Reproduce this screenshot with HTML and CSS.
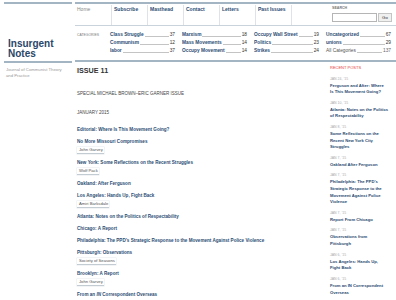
FILE: index.html
```html
<!DOCTYPE html>
<html lang="en">
<head>
    <meta charset="UTF-8">
    <meta name="viewport" content="width=device-width, initial-scale=1.0">
    <title>Insurgent Notes - Issue 11</title>
    <link rel="stylesheet" href="styles.css">
</head>
<body>
    <div class="page">
        <!-- left column: logo and tagline -->
        <div class="left-col">
            <div class="brand">
                <a class="logo" href="#">Insurgent<br>Notes</a>
            </div>
            <p class="tagline">Journal of Communist Theory and Practice</p>
        </div>

        <div class="main-col">
            <div class="masthead">
                <nav class="topnav">
                    <a class="nav-item home" href="#">Home</a>
                    <a class="nav-item" href="#">Subscribe</a>
                    <a class="nav-item" href="#">Masthead</a>
                    <a class="nav-item" href="#">Contact</a>
                    <a class="nav-item" href="#">Letters</a>
                    <a class="nav-item" href="#">Past Issues</a>
                    <div class="nav-item search-cell">
                        <form class="search">
                            <label for="s">Search</label>
                            <div class="search-row">
                                <input type="text" id="s">
                                <button type="button">Go</button>
                            </div>
                        </form>
                    </div>
                </nav>

                <div class="cats">
                    <div class="cats-label">Categories</div>
                    <ul class="cats-grid">
                        <li><a href="#">Class Struggle</a><span class="leader"></span><span class="count">37</span></li>
                        <li><a href="#">Communism</a><span class="leader"></span><span class="count">12</span></li>
                        <li><a href="#">labor</a><span class="leader"></span><span class="count">37</span></li>
                        <li><a href="#">Marxism</a><span class="leader"></span><span class="count">18</span></li>
                        <li><a href="#">Mass Movements</a><span class="leader"></span><span class="count">14</span></li>
                        <li><a href="#">Occupy Movement</a><span class="leader"></span><span class="count">14</span></li>
                        <li><a href="#">Occupy Wall Street</a><span class="leader"></span><span class="count">19</span></li>
                        <li><a href="#">Politics</a><span class="leader"></span><span class="count">23</span></li>
                        <li><a href="#">Strikes</a><span class="leader"></span><span class="count">24</span></li>
                        <li><a href="#">Uncategorized</a><span class="leader"></span><span class="count">67</span></li>
                        <li><a href="#">unions</a><span class="leader"></span><span class="count">29</span></li>
                        <li class="all"><a href="#">All Categories</a><span class="leader"></span><span class="count">137</span></li>
                    </ul>
                </div>
            </div>

            <div class="body">
                <div class="content">
                    <h1>Issue 11</h1>
                    <p class="issue-sub">Special Michael Brown–Eric Garner Issue</p>
                    <p class="issue-date">January 2015</p>

                    <ul class="toc">
                        <li><a class="title" href="#">Editorial: Where Is This Movement Going?</a></li>
                        <li><a class="title" href="#">No More Missouri Compromises</a><span class="author">John Garvey</span></li>
                        <li><a class="title" href="#">New York: Some Reflections on the Recent Struggles</a><span class="author">Wolf Pack</span></li>
                        <li><a class="title" href="#">Oakland: After Ferguson</a></li>
                        <li><a class="title" href="#">Los Angeles: Hands Up, Fight Back</a><span class="author">Amiri Barksdale</span></li>
                        <li><a class="title" href="#">Atlanta: Notes on the Politics of Respectability</a></li>
                        <li><a class="title" href="#">Chicago: A Report</a></li>
                        <li><a class="title" href="#">Philadelphia: The PPD’s Strategic Response to the Movement Against Police Violence</a></li>
                        <li><a class="title" href="#">Pittsburgh: Observations</a><span class="author">Society of Seasons</span></li>
                        <li><a class="title" href="#">Brooklyn: A Report</a><span class="author">John Garvey</span></li>
                        <li><a class="title" href="#">From an <em>IN</em> Correspondent Overseas</a></li>
                    </ul>
                </div>

                <aside class="sidebar">
                    <h3>Recent Posts</h3>
                    <ul class="recent">
                        <li><span class="date">Jan 24, ’15</span><a href="#">Ferguson and After: Where Is This Movement Going?</a></li>
                        <li><span class="date">Jan 10, ’15</span><a href="#">Atlanta: Notes on the Politics of Respectability</a></li>
                        <li><span class="date">Jan 8, ’15</span><a href="#">Some Reflections on the Recent New York City Struggles</a></li>
                        <li><span class="date">Jan 7, ’15</span><a href="#">Oakland After Ferguson</a></li>
                        <li><span class="date">Jan 7, ’15</span><a href="#">Philadelphia: The PPD’s Strategic Response to the Movement Against Police Violence</a></li>
                        <li><span class="date">Jan 7, ’15</span><a href="#">Report From Chicago</a></li>
                        <li><span class="date">Jan 7, ’15</span><a href="#">Observations from Pittsburgh</a></li>
                        <li><span class="date">Jan 6, ’15</span><a href="#">Los Angeles: Hands Up, Fight Back</a></li>
                        <li><span class="date">Jan 6, ’15</span><a href="#">From an IN Correspondent Overseas</a></li>
                        <li><span class="date">Dec 9, ’14</span><a href="#">Chicago Teachers</a></li>
                    </ul>
                </aside>
            </div>
        </div>
    </div>
</body>
</html>
```

FILE: styles.css
```css
body {
    margin: 0;
    font-family: "Liberation Sans", Arial, sans-serif;
    background: #ffffff;
    color: #333;
}
a {
    text-decoration: none;
    color: #2c4d74;
}
ul {
    list-style: none;
    margin: 0;
    padding: 0;
}
p {
    margin: 0;
}

.page {
    display: flex;
    padding: 2px 0 0 4px;
    gap: 3px;
}

/* left column */
.left-col {
    width: 68px;
    flex-shrink: 0;
}
.brand {
    border-top: 2px solid #a3b5c3;
    border-bottom: 2px solid #a3b5c3;
    display: flex;
    flex-direction: column;
    justify-content: flex-end;
    padding: 0 0 3px 4px;
    height: 54px;
}
.logo {
    font-size: 10px;
    line-height: 9.5px;
    font-weight: 700;
    color: #2a4668;
}
.tagline {
    margin-top: 4px;
    padding: 0 6px 0 2px;
    font-size: 4.25px;
    line-height: 6.3px;
    color: #999;
}

/* main column */
.main-col {
    flex: 1;
    min-width: 0;
}
.masthead {
    border-top: 2px solid #a3b5c3;
    border-bottom: 2px solid #a3b5c3;
}
.topnav {
    display: flex;
    padding-top: 1px;
    border-bottom: 1px solid #c9d3db;
}
.nav-item {
    width: 36px;
    height: 20px;
    box-sizing: border-box;
    padding: 1px 0 0 2px;
    border-left: 1px solid #dde3e8;
    font-size: 5px;
    line-height: 6px;
    font-weight: 700;
    color: #2c4d74;
}
.nav-item.home {
    border-left: none;
    font-weight: 400;
    color: #888;
}
.nav-item.search-cell {
    width: auto;
    flex: 1;
    display: flex;
    justify-content: flex-end;
    padding: 1px 4px 0 0;
}
.search label {
    display: block;
    font-size: 3.6px;
    line-height: 5px;
    text-transform: uppercase;
    color: #777;
}
.search-row {
    display: flex;
    gap: 1px;
    margin-top: 2px;
}
.search input {
    width: 45px;
    height: 9px;
    box-sizing: border-box;
    border: 1px solid #b5b5b5;
    padding: 0;
    margin: 0;
}
.search button {
    width: 14px;
    height: 9px;
    padding: 0;
    margin: 0;
    border: 1px solid #c4c4c4;
    background: #f0f0f0;
    font-family: inherit;
    font-size: 4.4px;
    color: #333;
}

.cats {
    display: flex;
    padding: 5px 0 5px;
}
.cats-label {
    width: 36px;
    padding-left: 2px;
    box-sizing: border-box;
    font-size: 3.4px;
    line-height: 8px;
    text-transform: uppercase;
    color: #777;
}
.cats-grid {
    display: grid;
    grid-template-columns: repeat(4, 72px);
    grid-template-rows: repeat(3, 8px);
    grid-auto-flow: column;
}
.cats-grid li {
    display: flex;
    align-items: flex-end;
    padding: 0 5px 0 2px;
    font-size: 4.8px;
    line-height: 8px;
}
.cats-grid a {
    font-weight: 700;
    white-space: nowrap;
}
.cats-grid .leader {
    flex: 1;
    border-bottom: 1px solid #c4c4c4;
    margin: 0 1px 2px;
}
.cats-grid .count {
    color: #333;
}
.cats-grid .all a {
    font-weight: 400;
    color: #555;
}
.cats-grid .all .count {
    color: #666;
}

/* issue contents + sidebar */
.body {
    display: flex;
}
.content {
    width: 245px;
    padding-left: 2px;
    flex-shrink: 0;
}
h1 {
    margin: 5px 0 0;
    font-size: 7.2px;
    line-height: 8px;
    font-weight: 700;
    text-transform: uppercase;
    color: #333;
}
.issue-sub,
.issue-date {
    font-size: 4.5px;
    line-height: 6px;
    text-transform: uppercase;
    color: #444;
}
.issue-sub {
    margin-top: 16px;
}
.issue-date {
    margin-top: 13px;
}
.toc {
    margin-top: 11px;
}
.toc li {
    margin-bottom: 6px;
}
.toc .title {
    display: block;
    font-size: 4.6px;
    line-height: 6px;
    font-weight: 700;
    white-space: nowrap;
}
.toc .title em {
    font-style: italic;
}
.toc .author {
    display: table;
    margin-top: 2px;
    padding: 0 1px 0 2px;
    font-size: 4.2px;
    line-height: 6px;
    color: #555;
    border-bottom: 1px solid #c3cbd3;
    box-shadow: 0 0 0 0.5px #e6e9ec;
}

.sidebar {
    margin-left: 8px;
    width: 58.4px;
    padding-top: 3px;
}
.sidebar h3 {
    margin: 0;
    font-size: 4px;
    line-height: 6px;
    font-weight: 400;
    text-transform: uppercase;
    color: #e8433a;
}
.recent {
    margin-top: 4.5px;
}
.recent li {
    margin-bottom: 3.8px;
}
.recent .date {
    display: block;
    font-size: 3.5px;
    line-height: 7px;
    text-transform: uppercase;
    color: #aaa;
}
.recent a {
    display: block;
    font-size: 4.2px;
    line-height: 6.7px;
    font-weight: 700;
    color: #2a4a70;
}
```
